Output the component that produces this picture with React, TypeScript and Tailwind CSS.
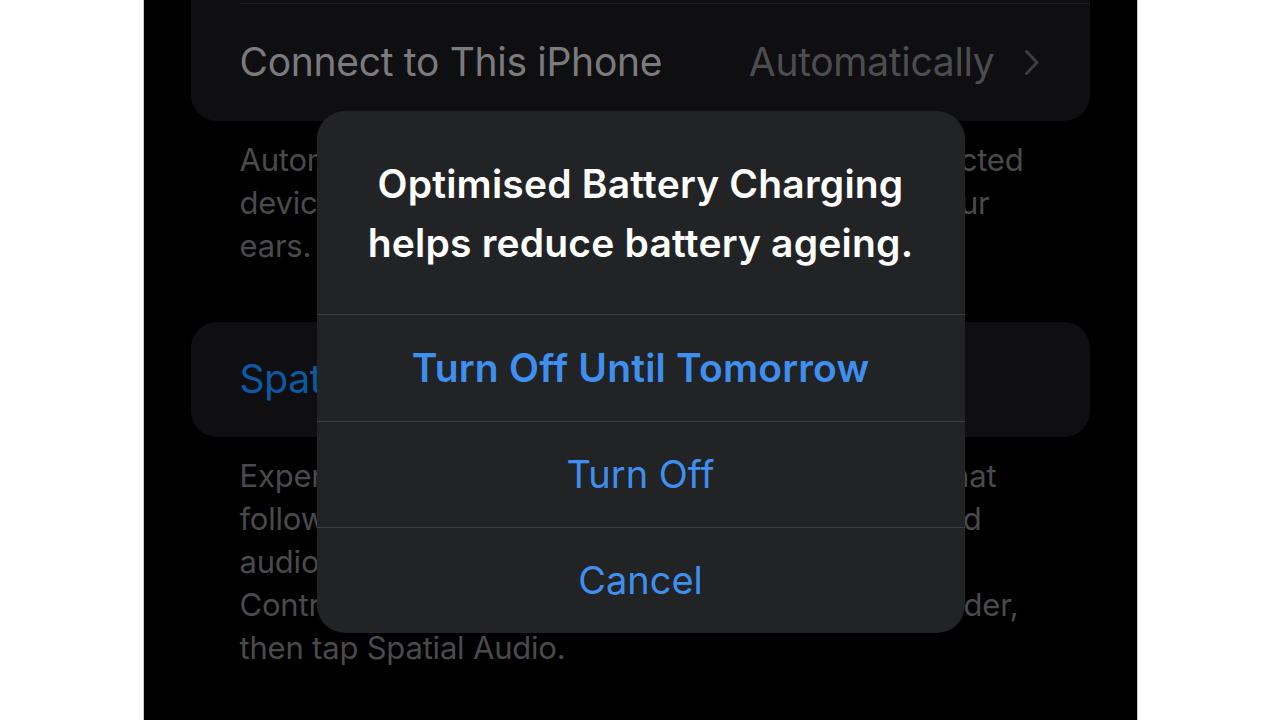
const font = { fontFamily: "Inter, 'Noto Sans', sans-serif" };

type Line = { text: string; w?: number };

function FooterText({ lines }: { lines: Line[] }) {
  return (
    <div className="px-[49px] text-[31px] leading-[43px] text-[#4a4a4c] tracking-[-0.2px]">
      {lines.map((l) =>
        l.w ? (
          <div key={l.text} className="whitespace-nowrap text-justify [text-align-last:justify]" style={{ width: l.w }}>
            {l.text}
          </div>
        ) : (
          <div key={l.text} className="whitespace-nowrap">
            {l.text}
          </div>
        ),
      )}
    </div>
  );
}

function Chevron() {
  return (
    <svg width="16" height="27" viewBox="0 0 16 27" fill="none" className="text-[#3d3d3f]">
      <path d="M2.5 2.5 13 13.5 2.5 24.5" stroke="currentColor" strokeWidth="3" strokeLinecap="round" strokeLinejoin="round" />
    </svg>
  );
}

function Dialog() {
  return (
    <div className="absolute left-[173px] top-[111px] w-[648px] overflow-hidden rounded-[28px] bg-[#222325]">
      <div className="flex h-[203px] flex-col items-center justify-center text-center text-[39px] font-semibold leading-[59px] tracking-[0.2px] text-white">
        <div>Optimised Battery Charging</div>
        <div>helps reduce battery ageing.</div>
      </div>
      <div className="flex h-[107px] items-center justify-center border-t border-[#3c3d3f] text-[39px] font-semibold tracking-[0.2px] text-[#3f8ff0]">
        Turn Off Until Tomorrow
      </div>
      <div className="flex h-[106px] items-center justify-center border-t border-[#3c3d3f] text-[38px] text-[#3f8ff0]">
        Turn Off
      </div>
      <div className="flex h-[106px] items-center justify-center border-t border-[#3c3d3f] text-[38px] text-[#3f8ff0]">
        Cancel
      </div>
    </div>
  );
}

export default function App() {
  return (
    <div className="flex h-[720px] w-[1280px] justify-center overflow-hidden bg-white" style={font}>
      <div className="relative h-[720px] w-[995px] overflow-hidden border-x border-[#c8c8c8] bg-black">
        <div className="-mt-[84px] flex flex-col px-[47px]">
          <div className="overflow-hidden rounded-[26px] bg-[#0f0f11]">
            <div className="ml-[49px] h-[88px] border-b border-[#1e1e20]" />
            <div className="flex h-[117px] items-center justify-between pl-[49px] pr-[50px] text-[39px] tracking-[-0.3px]">
              <span className="text-[#7b7b7d]">Connect to This iPhone</span>
              <span className="flex items-center gap-[29px] text-[#4d4d4f]">
                Automatically
                <Chevron />
              </span>
            </div>
          </div>
          <div className="mt-[17px]">
            <FooterText
              lines={[
                { text: "Automatically switch to this iPhone from a connected", w: 784 },
                { text: "device while AirPods are in your", w: 750 },
                { text: "ears." },
              ]}
            />
          </div>
          <div className="mt-[55px] flex h-[115px] items-center rounded-[26px] bg-[#0f0f11] pl-[49px] text-[39px] tracking-[-0.3px] text-[#0c5aa6]">
            Spatial Audio
          </div>
          <div className="mt-[17px]">
            <FooterText
              lines={[
                { text: "Experience immersive sound with head tracking that", w: 752 },
                { text: "follows the movement of your head and", w: 742 },
                { text: "audio. To turn it on or off, open" },
                { text: "Control Centre, touch and hold the volume slider,", w: 779 },
                { text: "then tap Spatial Audio." },
              ]}
            />
          </div>
        </div>
        <Dialog />
      </div>
    </div>
  );
}
